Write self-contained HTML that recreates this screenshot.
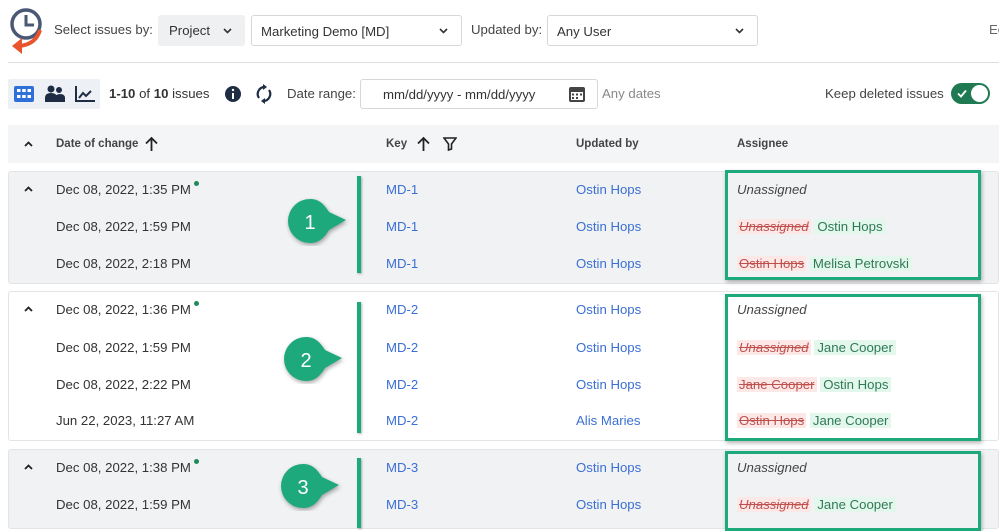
<!DOCTYPE html>
<html><head><meta charset="utf-8"><style>
*{box-sizing:border-box;margin:0;padding:0}
body{width:999px;height:518px;overflow:hidden;background:#fff;font-family:"Liberation Sans",Arial,sans-serif;color:#333;position:relative;font-size:13.2px}
.a{position:absolute;white-space:nowrap}
.box{position:absolute;border:1px solid #d5d7db;border-radius:3px;background:#fff}
.hdr{font-size:11.5px;font-weight:bold;color:#444}
.lnk{color:#3b6fd4}
.grp{position:absolute;left:8px;right:0;border:1px solid #e2e4e8;border-radius:3px}
.bar{position:absolute;left:357px;width:4px;background:#1ea97c;box-shadow:1px 1px 2px rgba(0,0,0,.3)}
.gbox{position:absolute;left:725px;width:256px;border:3px solid #1ea97c;box-shadow:1px 2px 4px rgba(0,0,0,.3)}
.del{color:#c0504d;text-decoration:line-through;background:#fde8e8;padding:0 2px}
.del.i{font-style:italic}
.add{color:#2f7a55;background:#e3f7ec;padding:0 3px}
.it{font-style:italic;color:#444}
.dot{display:inline-block;width:5px;height:5px;border-radius:50%;background:#1f8a5a;vertical-align:top;margin-left:3px;margin-top:-1px}
</style></head><body>
<svg class="a" style="left:8px;top:6px" width="40" height="50" viewBox="0 0 40 50">
<circle cx="18" cy="18" r="14" fill="none" stroke="#4a5876" stroke-width="3.5"/>
<path d="M18 9v10h8" fill="none" stroke="#4a5876" stroke-width="3"/>
<path d="M32 24 Q28 38 12 40" fill="none" stroke="#e8552d" stroke-width="4"/>
<path d="M4 40 L14 32 L14 48Z" fill="#e8552d"/>
</svg>
<div class="a" style="left:54px;top:22px;color:#444">Select issues by:</div>
<div class="a" style="left:158px;top:15px;width:87px;height:31px;background:#eff0f2;border-radius:3px;padding:8px 11px">Project</div>
<svg class="a" style="left:223px;top:28px" width="9" height="6"><path d="M1 1l3.5 3.5L8 1" fill="none" stroke="#333" stroke-width="1.6"/></svg>
<div class="box" style="left:251px;top:15px;width:211px;height:31px;padding:8px 9px">Marketing Demo [MD]</div>
<svg class="a" style="left:439px;top:28px" width="9" height="6"><path d="M1 1l3.5 3.5L8 1" fill="none" stroke="#333" stroke-width="1.6"/></svg>
<div class="a" style="left:471px;top:22px;color:#444">Updated by:</div>
<div class="box" style="left:547px;top:15px;width:211px;height:31px;padding:8px 9px">Any User</div>
<svg class="a" style="left:735px;top:28px" width="9" height="6"><path d="M1 1l3.5 3.5L8 1" fill="none" stroke="#333" stroke-width="1.6"/></svg>
<div class="a" style="left:989px;top:22px;color:#666">Ec</div>
<div class="a" style="left:8px;right:0;top:62px;height:1px;background:#dcdfe3"></div>

<div class="a" style="left:8px;top:79px;width:92px;height:30px;background:#edf1f6;border-radius:2px"></div>
<svg class="a" style="left:14px;top:86px" width="20" height="16"><rect width="20" height="16" rx="2" fill="#2f6fd8"/><g fill="#fff"><rect x="3" y="3" width="3.5" height="3"/><rect x="8.2" y="3" width="3.5" height="3"/><rect x="13.5" y="3" width="3.5" height="3"/><rect x="3" y="9" width="3.5" height="3"/><rect x="8.2" y="9" width="3.5" height="3"/><rect x="13.5" y="9" width="3.5" height="3"/></g></svg>
<svg class="a" style="left:45px;top:84px" width="20" height="20"><circle cx="6" cy="5" r="3.5" fill="#1f2d44"/><circle cx="14" cy="6" r="3" fill="#1f2d44"/><path d="M0 18v-4q0-5 6-5t6 5v4zM9 18v-3q1-5 6-5t5 4v4z" fill="#1f2d44"/></svg>
<svg class="a" style="left:74px;top:85px" width="22" height="18"><path d="M2 1v15h19" fill="none" stroke="#1f2d44" stroke-width="2"/><path d="M5 13l4-5 3 3 5-5" fill="none" stroke="#1f2d44" stroke-width="2"/></svg>
<div class="a" style="left:109px;top:86px;color:#333"><b>1-10</b> of <b>10</b> issues</div>
<svg class="a" style="left:224px;top:85px" width="18" height="18"><circle cx="9" cy="9" r="8" fill="#1f2d44"/><rect x="8" y="8" width="2" height="6" fill="#fff"/><circle cx="9" cy="5" r="1.2" fill="#fff"/></svg>
<svg class="a" style="left:255px;top:84px" width="18" height="20"><path d="M4 14a7 7 0 0 1 6-11M14 6a7 7 0 0 1-6 11" fill="none" stroke="#1f2d44" stroke-width="2.2"/><path d="M8 0l4 3-4 3zM10 14l-4 3 4 3z" fill="#1f2d44"/></svg>
<div class="a" style="left:287px;top:86px;color:#444">Date range:</div>
<div class="box" style="left:360px;top:79px;width:238px;height:30px;padding:7px 22px">mm/dd/yyyy - mm/dd/yyyy</div>
<svg class="a" style="left:568px;top:85px" width="18" height="18"><rect x="1" y="2" width="16" height="15" rx="2" fill="#444"/><rect x="3" y="7" width="12" height="8" fill="#fff"/><g fill="#444"><rect x="4" y="8.5" width="2" height="2"/><rect x="8" y="8.5" width="2" height="2"/><rect x="12" y="8.5" width="2" height="2"/><rect x="4" y="12" width="2" height="2"/><rect x="8" y="12" width="2" height="2"/></g></svg>
<div class="a" style="left:602px;top:86px;color:#888">Any dates</div>
<div class="a" style="left:825px;top:86px;color:#444">Keep deleted issues</div>
<div class="a" style="left:951px;top:83px;width:39px;height:21px;border-radius:11px;background:#1f7a53"><svg class="a" style="left:6px;top:6px" width="10" height="9"><path d="M1 4.5l3 3L9 1.5" fill="none" stroke="#fff" stroke-width="1.8"/></svg><span class="a" style="left:20px;top:2px;width:17px;height:17px;border-radius:50%;background:#fff"></span></div>

<div class="a" style="left:8px;right:0;top:125px;height:38px;background:#f4f5f7"></div>
<svg class="a" style="left:24px;top:141px" width="9" height="6"><path d="M1 5l3.5-3.5L8 5" fill="none" stroke="#222" stroke-width="1.8"/></svg>
<div class="a hdr" style="left:56px;top:138px">Date of change</div>
<svg class="a" style="left:145px;top:136px" width="13" height="16"><path d="M6.5 15V2M1 7.5l5.5-5.5 5.5 5.5" fill="none" stroke="#222" stroke-width="1.8"/></svg>
<div class="a hdr" style="left:386px;top:138px">Key</div>
<svg class="a" style="left:417px;top:136px" width="13" height="16"><path d="M6.5 15V2M1 7.5l5.5-5.5 5.5 5.5" fill="none" stroke="#222" stroke-width="1.8"/></svg>
<svg class="a" style="left:443px;top:137px" width="14" height="14"><path d="M1 1h12L8.5 7v5L5.5 13V7z" fill="none" stroke="#222" stroke-width="1.6"/></svg>
<div class="a hdr" style="left:576px;top:138px">Updated by</div>
<div class="a hdr" style="left:737px;top:138px">Assignee</div>

<div class="grp" style="top:171px;height:113px;background:#f1f2f4"></div>
<div class="grp" style="top:291px;height:150px;background:#fff"></div>
<div class="grp" style="top:449px;height:80px;background:#f1f2f4"></div>

<!-- group1 -->
<svg class="a" style="left:24px;top:186px" width="9" height="6"><path d="M1 5l3.5-3.5L8 5" fill="none" stroke="#222" stroke-width="1.8"/></svg>
<div class="a" style="left:56px;top:182px">Dec 08, 2022, 1:35 PM<span class="dot"></span></div>
<div class="a" style="left:56px;top:219px">Dec 08, 2022, 1:59 PM</div>
<div class="a" style="left:56px;top:256px">Dec 08, 2022, 2:18 PM</div>
<div class="a lnk" style="left:386px;top:182px">MD-1</div><div class="a lnk" style="left:386px;top:219px">MD-1</div><div class="a lnk" style="left:386px;top:256px">MD-1</div>
<div class="a lnk" style="left:576px;top:182px">Ostin Hops</div><div class="a lnk" style="left:576px;top:219px">Ostin Hops</div><div class="a lnk" style="left:576px;top:256px">Ostin Hops</div>
<div class="a it" style="left:737px;top:182px">Unassigned</div>
<div class="a" style="left:737px;top:219px"><span class="del i">Unassigned</span> <span class="add">Ostin Hops</span></div>
<div class="a" style="left:737px;top:256px"><span class="del">Ostin Hops</span> <span class="add">Melisa Petrovski</span></div>
<!-- group2 -->
<svg class="a" style="left:24px;top:306px" width="9" height="6"><path d="M1 5l3.5-3.5L8 5" fill="none" stroke="#222" stroke-width="1.8"/></svg>
<div class="a" style="left:56px;top:302px">Dec 08, 2022, 1:36 PM<span class="dot"></span></div>
<div class="a" style="left:56px;top:340px">Dec 08, 2022, 1:59 PM</div>
<div class="a" style="left:56px;top:377px">Dec 08, 2022, 2:22 PM</div>
<div class="a" style="left:56px;top:413px">Jun 22, 2023, 11:27 AM</div>
<div class="a lnk" style="left:386px;top:302px">MD-2</div><div class="a lnk" style="left:386px;top:340px">MD-2</div><div class="a lnk" style="left:386px;top:377px">MD-2</div><div class="a lnk" style="left:386px;top:413px">MD-2</div>
<div class="a lnk" style="left:576px;top:302px">Ostin Hops</div><div class="a lnk" style="left:576px;top:340px">Ostin Hops</div><div class="a lnk" style="left:576px;top:377px">Ostin Hops</div><div class="a lnk" style="left:576px;top:413px">Alis Maries</div>
<div class="a it" style="left:737px;top:302px">Unassigned</div>
<div class="a" style="left:737px;top:340px"><span class="del i">Unassigned</span> <span class="add">Jane Cooper</span></div>
<div class="a" style="left:737px;top:377px"><span class="del">Jane Cooper</span> <span class="add">Ostin Hops</span></div>
<div class="a" style="left:737px;top:413px"><span class="del">Ostin Hops</span> <span class="add">Jane Cooper</span></div>
<!-- group3 -->
<svg class="a" style="left:24px;top:464px" width="9" height="6"><path d="M1 5l3.5-3.5L8 5" fill="none" stroke="#222" stroke-width="1.8"/></svg>
<div class="a" style="left:56px;top:460px">Dec 08, 2022, 1:38 PM<span class="dot"></span></div>
<div class="a" style="left:56px;top:497px">Dec 08, 2022, 1:59 PM</div>
<div class="a lnk" style="left:386px;top:460px">MD-3</div><div class="a lnk" style="left:386px;top:497px">MD-3</div>
<div class="a lnk" style="left:576px;top:460px">Ostin Hops</div><div class="a lnk" style="left:576px;top:497px">Ostin Hops</div>
<div class="a it" style="left:737px;top:460px">Unassigned</div>
<div class="a" style="left:737px;top:497px"><span class="del i">Unassigned</span> <span class="add">Jane Cooper</span></div>

<div class="bar" style="top:176px;height:97px"></div>
<div class="bar" style="top:302px;height:131px"></div>
<div class="bar" style="top:458px;height:70px"></div>
<div class="gbox" style="top:170px;height:110px"></div>
<div class="gbox" style="top:294px;height:147px"></div>
<div class="gbox" style="top:451px;height:80px"></div>

<svg class="a" style="left:280px;top:196px" width="72" height="50"><path d="M30 3a22 22 0 1 0 0 44c9 0 14-5 19-13l17-10-17-8C44 8 39 3 30 3z" fill="#1ea97c" filter="drop-shadow(1px 2px 2px rgba(0,0,0,.35))"/><text x="30" y="33" fill="#fff" font-size="20" text-anchor="middle" font-family="Liberation Sans">1</text></svg>
<svg class="a" style="left:276px;top:334px" width="72" height="50"><path d="M30 3a22 22 0 1 0 0 44c9 0 14-5 19-13l17-10-17-8C44 8 39 3 30 3z" fill="#1ea97c" filter="drop-shadow(1px 2px 2px rgba(0,0,0,.35))"/><text x="30" y="33" fill="#fff" font-size="20" text-anchor="middle" font-family="Liberation Sans">2</text></svg>
<svg class="a" style="left:273px;top:461px" width="72" height="50"><path d="M30 3a22 22 0 1 0 0 44c9 0 14-5 19-13l17-10-17-8C44 8 39 3 30 3z" fill="#1ea97c" filter="drop-shadow(1px 2px 2px rgba(0,0,0,.35))"/><text x="30" y="33" fill="#fff" font-size="20" text-anchor="middle" font-family="Liberation Sans">3</text></svg>
</body></html>
